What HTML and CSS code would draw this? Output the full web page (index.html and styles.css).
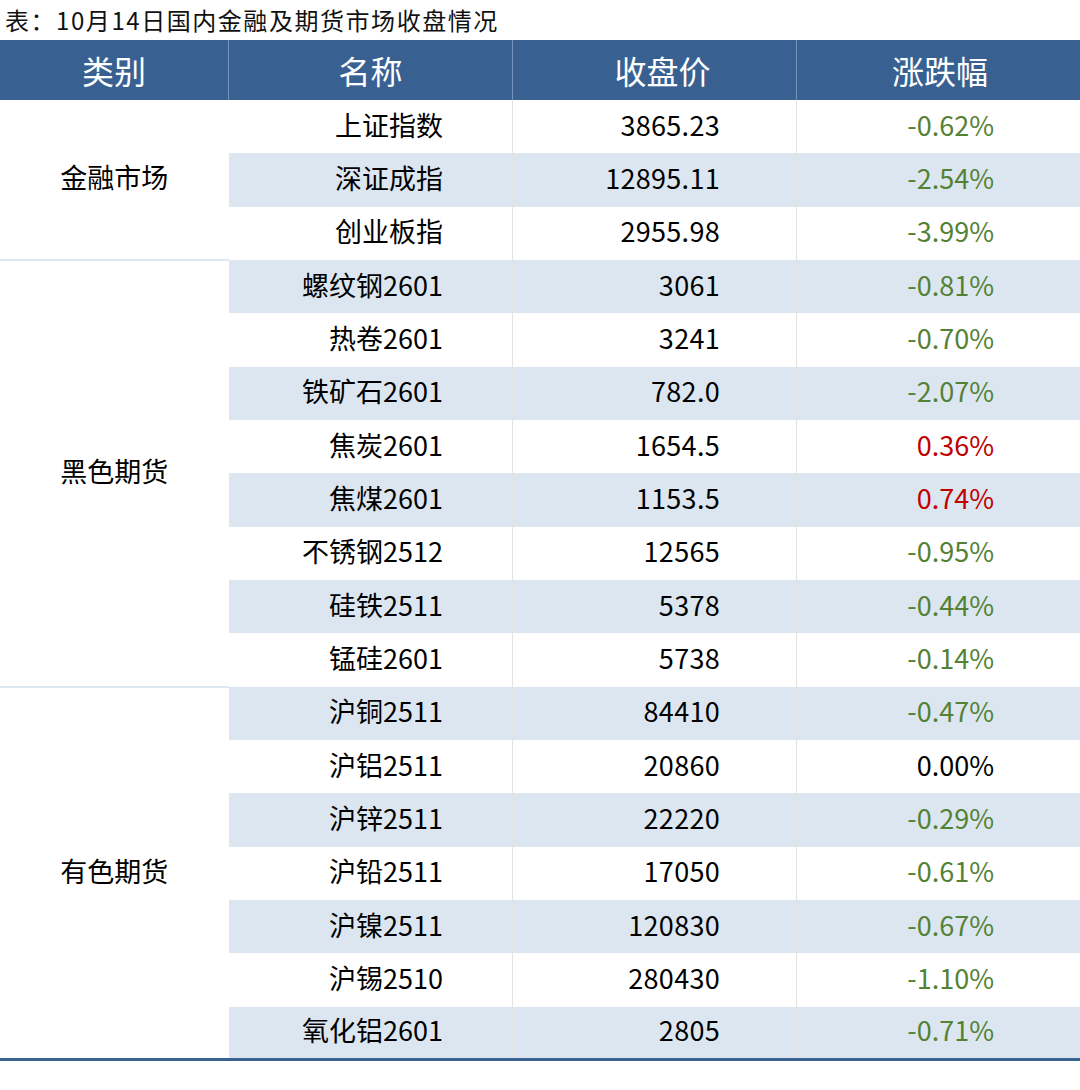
FILE: index.html
```html
<!DOCTYPE html>
<html lang="zh">
<head>
<meta charset="utf-8">
<link rel="stylesheet" href="styles.css">
</head>
<body>
<div class="title">表：10月14日国内金融及期货市场收盘情况</div>
<table class="tbl">
  <thead>
    <tr><th class="c1">类别</th><th class="c2">名称</th><th class="c3">收盘价</th><th class="c4">涨跌幅</th></tr>
  </thead>
  <tbody>
    <tr><td class="cat" rowspan="3">金融市场</td><td class="name">上证指数</td><td class="price">3865.23</td><td class="pct dn">-0.62%</td></tr>
    <tr class="alt"><td class="name">深证成指</td><td class="price">12895.11</td><td class="pct dn">-2.54%</td></tr>
    <tr><td class="name">创业板指</td><td class="price">2955.98</td><td class="pct dn">-3.99%</td></tr>

    <tr class="alt"><td class="cat grp" rowspan="8">黑色期货</td><td class="name">螺纹钢2601</td><td class="price">3061</td><td class="pct dn">-0.81%</td></tr>
    <tr><td class="name">热卷2601</td><td class="price">3241</td><td class="pct dn">-0.70%</td></tr>
    <tr class="alt"><td class="name">铁矿石2601</td><td class="price">782.0</td><td class="pct dn">-2.07%</td></tr>
    <tr><td class="name">焦炭2601</td><td class="price">1654.5</td><td class="pct up">0.36%</td></tr>
    <tr class="alt"><td class="name">焦煤2601</td><td class="price">1153.5</td><td class="pct up">0.74%</td></tr>
    <tr><td class="name">不锈钢2512</td><td class="price">12565</td><td class="pct dn">-0.95%</td></tr>
    <tr class="alt"><td class="name">硅铁2511</td><td class="price">5378</td><td class="pct dn">-0.44%</td></tr>
    <tr><td class="name">锰硅2601</td><td class="price">5738</td><td class="pct dn">-0.14%</td></tr>

    <tr class="alt"><td class="cat grp" rowspan="7">有色期货</td><td class="name">沪铜2511</td><td class="price">84410</td><td class="pct dn">-0.47%</td></tr>
    <tr><td class="name">沪铝2511</td><td class="price">20860</td><td class="pct">0.00%</td></tr>
    <tr class="alt"><td class="name">沪锌2511</td><td class="price">22220</td><td class="pct dn">-0.29%</td></tr>
    <tr><td class="name">沪铅2511</td><td class="price">17050</td><td class="pct dn">-0.61%</td></tr>
    <tr class="alt"><td class="name">沪镍2511</td><td class="price">120830</td><td class="pct dn">-0.67%</td></tr>
    <tr><td class="name">沪锡2510</td><td class="price">280430</td><td class="pct dn">-1.10%</td></tr>
    <tr class="alt"><td class="name">氧化铝2601</td><td class="price">2805</td><td class="pct dn">-0.71%</td></tr>
  </tbody>
</table>
</body>
</html>
```

FILE: styles.css
```css
html, body {
  margin: 0;
  padding: 0;
  background: #ffffff;
}
body {
  width: 1080px;
  font-family: "Noto Sans CJK SC", "Noto Sans", sans-serif;
  color: #000;
}
.title {
  height: 40px;
  line-height: 40px;
  padding-left: 5px;
  font-size: 24px;
  letter-spacing: 1.55px;
  color: #111;
  white-space: nowrap;
}
.tbl {
  width: 1080px;
  border-collapse: collapse;
  table-layout: fixed;
  border-bottom: 3px solid #3a6391;
}
.tbl th {
  background: #386192;
  color: #fff;
  font-weight: 400;
  font-size: 32px;
  height: 60px;
  padding: 0;
  text-align: center;
  border-left: 1px solid #7393ba;
}
.tbl th.c1 { width: 228px; border-left: none; }
.tbl th.c2 { width: 283px; }
.tbl th.c3 { width: 283px; text-indent: 16px; }
.tbl th.c4 { width: 286px; }
.tbl td {
  height: 53.33px;
  padding: 0 0 4px 0;
  box-sizing: border-box;
  font-size: 27px;
  line-height: 30px;
  white-space: nowrap;
}
.tbl tr.alt td:not(.cat) { background: #dce6f1; }
.tbl td.cat {
  text-align: center;
  background: #fff;
}
.tbl td.grp { border-top: 2px solid #dfe7f2; }
.tbl td.name {
  text-align: right;
  padding-right: 69px;
}
.tbl td.price {
  text-align: right;
  padding-right: 76px;
  border-left: 1px solid #e3e3e3;
  letter-spacing: 0.3px;
}
.tbl td.pct {
  text-align: right;
  padding-right: 89px;
  border-left: 1px solid #e3e3e3;
}
.tbl td.dn { color: #548235; }
.tbl td.up { color: #c00000; }
```
